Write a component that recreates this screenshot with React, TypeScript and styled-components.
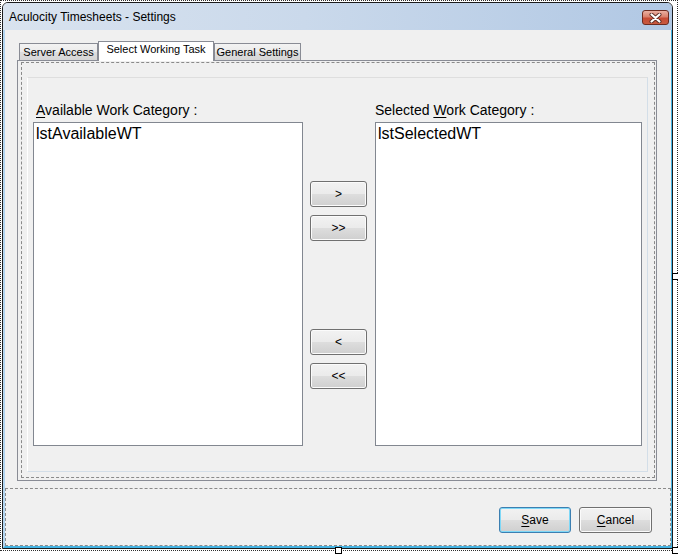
import * as React from 'react';
import styled, { createGlobalStyle } from 'styled-components';

const GlobalStyle = createGlobalStyle`
  html, body {
    margin: 0;
    padding: 0;
    background: #ffffff;
  }
  body {
    font-family: "Liberation Sans", Arial, sans-serif;
    color: #000;
  }
`;

const DesignSurface = styled.div`
  position: relative;
  width: 678px;
  height: 554px;
  overflow: hidden;
`;

const Selection = styled.div`
  box-sizing: border-box;
  width: 678px;
  height: 551px;
  border: 1px dotted #2e2e2e;
  padding: 1px 4px 1px 1px;
`;

const Handle = styled.div`
  position: absolute;
  box-sizing: border-box;
  width: 7px;
  height: 7px;
  background: #fff;
  border: 1px solid #000;
`;

const Window = styled.div`
  box-sizing: border-box;
  width: 671px;
  height: 547px;
  border: 1px solid #1c1c1c;
  border-radius: 6px 6px 0 0;
  overflow: hidden;
  display: flex;
  flex-direction: column;
  background: #f0f0f0;
`;

const TitleBar = styled.div`
  box-sizing: border-box;
  height: 27px;
  flex: none;
  display: flex;
  justify-content: space-between;
  align-items: flex-start;
  padding: 7px 3px 0 6px;
  background: linear-gradient(to right, #d9e3ef 0%, #cad9eb 45%, #b1c8e4 100%);
  font-size: 12px;
  line-height: 15px;
`;

const CloseButton = styled.div`
  box-sizing: border-box;
  width: 27px;
  height: 15px;
  border: 1px solid #6d2b20;
  border-radius: 3px;
  background: linear-gradient(#eab0a2 0%, #d9806c 45%, #c64b35 55%, #c85a40 100%);
  display: flex;
  align-items: center;
  justify-content: center;
`;

const Client = styled.div`
  flex: 1;
  display: flex;
  flex-direction: column;
  border-left: 2px solid #b3d5f0;
  border-right: 1px solid #44b4e4;
  border-bottom: 2px solid #44b4e4;
  background: #f0f0f0;
`;

const TabArea = styled.div`
  box-sizing: border-box;
  height: 458px;
  flex: none;
  display: flex;
  flex-direction: column;
  padding: 11px 14px 7px 12px;
`;

const TabStrip = styled.div`
  height: 19px;
  display: flex;
  align-items: flex-end;
  padding-left: 2px;
`;

const Tab = styled.div<{ $active?: boolean; $w: number }>`
  box-sizing: border-box;
  position: relative;
  z-index: ${(p) => (p.$active ? 2 : 1)};
  width: ${(p) => p.$w}px;
  height: ${(p) => (p.$active ? 20 : 17)}px;
  margin-bottom: ${(p) => (p.$active ? -1 : 0)}px;
  border: 1px solid #898c95;
  border-bottom: none;
  background: ${(p) =>
    p.$active ? '#ffffff' : 'linear-gradient(#f3f3f3 0%, #ebebeb 50%, #dedede 51%, #d6d6d6 100%)'};
  font-size: 11px;
  line-height: ${(p) => (p.$active ? 15 : 16)}px;
  text-align: center;
  white-space: nowrap;
`;

const Page = styled.div`
  box-sizing: border-box;
  flex: 1;
  display: flex;
  border: 1px solid #898c95;
  padding: 1px 1px 2px 3px;
`;

const PageDesign = styled.div`
  flex: 1;
  display: flex;
  border: 1px dashed #8a8a8a;
  padding: 14px 6px 5px 5px;
`;

const InnerPanel = styled.div`
  flex: 1;
  display: grid;
  grid-template-columns: 270px 72px 267px;
  grid-template-rows: 20px 1fr;
  padding: 24px 3px 25px 5px;
  border: 1px solid;
  border-color: #dedede #d3dee8 #d3dee8 #ffffff;
`;

const Caption = styled.div<{ $indent?: number }>`
  font-size: 14px;
  line-height: 16px;
  padding-left: ${(p) => p.$indent ?? 0}px;
  white-space: nowrap;
`;

const ListBox = styled.div`
  box-sizing: border-box;
  background: #fff;
  border: 1px solid #828790;
  padding: 2px 2px;
  font-size: 16px;
  line-height: 18px;
`;

const MoveColumn = styled.div`
  display: flex;
  flex-direction: column;
  gap: 8px;
  padding: 59px 0 0 7px;
`;

const Button = styled.div<{ $w?: number; $push?: number; $default?: boolean }>`
  box-sizing: border-box;
  width: ${(p) => p.$w ?? 57}px;
  height: 26px;
  margin-top: ${(p) => p.$push ?? 0}px;
  border: 1px solid ${(p) => (p.$default ? '#3c7fb1' : '#707070')};
  border-radius: 3px;
  background: linear-gradient(#f2f2f2 0%, #ebebeb 48%, #dddddd 52%, #cfcfcf 100%);
  box-shadow: inset 0 0 0 1px ${(p) => (p.$default ? '#7fd8f7' : '#fbfbfb')};
  display: flex;
  align-items: center;
  justify-content: center;
  font-size: 12px;
  color: #000;
`;

const BottomPanel = styled.div`
  box-sizing: border-box;
  height: 58px;
  flex: none;
  display: flex;
  justify-content: flex-end;
  align-items: flex-start;
  gap: 8px;
  padding: 18px 18px 0 0;
  border: 1px dashed #8a8a8a;
`;

const U = styled.span`
  text-decoration: underline;
  text-underline-offset: 2px;
`;

const CloseGlyph = () => (
  <svg width="13" height="10" viewBox="0 0 13 10">
    <path d="M2.5 1.5 L10.5 8.5 M10.5 1.5 L2.5 8.5" stroke="#5a2b24" strokeWidth="4" strokeLinecap="round" />
    <path d="M2.5 1.5 L10.5 8.5 M10.5 1.5 L2.5 8.5" stroke="#ffffff" strokeWidth="2.2" strokeLinecap="round" />
  </svg>
);

export default function App() {
  return (
    <DesignSurface>
      <GlobalStyle />
      <Selection>
        <Window>
          <TitleBar>
            <span>Aculocity Timesheets - Settings</span>
            <CloseButton>
              <CloseGlyph />
            </CloseButton>
          </TitleBar>
          <Client>
            <TabArea>
              <TabStrip>
                <Tab $w={79}>Server Access</Tab>
                <Tab $w={116} $active>
                  Select Working Task
                </Tab>
                <Tab $w={87}>General Settings</Tab>
              </TabStrip>
              <Page>
                <PageDesign>
                  <InnerPanel>
                    <Caption $indent={3}>
                      <U>A</U>vailable Work Category :
                    </Caption>
                    <div />
                    <Caption>
                      Selected <U>W</U>ork Category :
                    </Caption>
                    <ListBox>lstAvailableWT</ListBox>
                    <MoveColumn>
                      <Button>&gt;</Button>
                      <Button>&gt;&gt;</Button>
                      <Button $push={80}>&lt;</Button>
                      <Button>&lt;&lt;</Button>
                    </MoveColumn>
                    <ListBox>lstSelectedWT</ListBox>
                  </InnerPanel>
                </PageDesign>
              </Page>
            </TabArea>
            <BottomPanel>
              <Button $w={72} $default>
                <U>S</U>ave
              </Button>
              <Button $w={73}>
                <U>C</U>ancel
              </Button>
            </BottomPanel>
          </Client>
        </Window>
      </Selection>
      <Handle style={{ left: 335, top: 547 }} />
      <Handle style={{ left: 672, top: 273 }} />
      <Handle style={{ left: 672, top: 547 }} />
    </DesignSurface>
  );
}
